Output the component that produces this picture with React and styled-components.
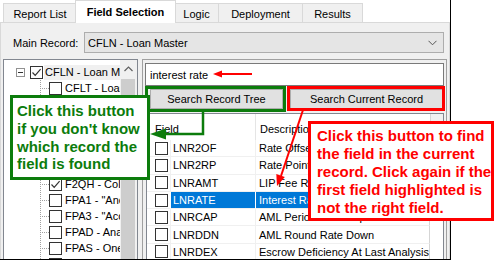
import React from "react";
import styled, { createGlobalStyle } from "styled-components";

const GREEN = "#0c7c0c";
const RED = "#ff0000";

const GlobalStyle = createGlobalStyle`
  html, body { margin: 0; padding: 0; background: #fff; }
  body { font-family: "Liberation Sans", Arial, sans-serif; font-size: 11px; color: #000; }
  * { box-sizing: border-box; }
`;

const Root = styled.div`
  position: relative;
  width: 495px;
  height: 260px;
  overflow: hidden;
  background: #fff;
`;

const Window = styled.div`
  width: 451px;
  height: 260px;
  border-right: 1px solid #000;
  border-bottom: 1px solid #000;
  display: flex;
  flex-direction: column;
  background: #fff;
`;

const TabStrip = styled.div`
  height: 22px;
  display: flex;
  align-items: flex-end;
  padding-left: 3px;
  position: relative;
  z-index: 1;
`;

const Tab = styled.div`
  width: ${(p) => p.$w}px;
  height: ${(p) => (p.$active ? 23 : 19)}px;
  margin-bottom: ${(p) => (p.$active ? -1 : 0)}px;
  margin-left: ${(p) => (p.$first ? 0 : p.$active ? -2 : -1)}px;
  margin-right: ${(p) => (p.$active ? -1 : 0)}px;
  border: 1px solid #d9d9d9;
  border-bottom: none;
  background: ${(p) => (p.$active ? "#ffffff" : "#f0f0f0")};
  font-weight: ${(p) => (p.$active ? "bold" : "normal")};
  display: flex;
  align-items: center;
  justify-content: center;
  padding-top: ${(p) => (p.$active ? 0 : 1)}px;
  position: relative;
  z-index: ${(p) => (p.$active ? 2 : 1)};
  white-space: nowrap;
`;

const TabPage = styled.div`
  flex: 1;
  min-height: 0;
  background: #f0f0f0;
  border: 1px solid #d9d9d9;
  border-bottom: none;
  display: flex;
  flex-direction: column;
  padding-top: 9px;
`;

const MainRow = styled.div`
  display: flex;
  align-items: center;
  height: 21px;
  padding: 0 5px 0 12px;
`;

const Label = styled.div`
  width: 71px;
  white-space: nowrap;
`;

const Combo = styled.div`
  width: 360px;
  height: 21px;
  border: 1px solid #adadad;
  background: #e5e5e5;
  display: flex;
  align-items: center;
  justify-content: space-between;
  padding: 0 6px 0 3px;
`;

const Lower = styled.div`
  flex: 1;
  min-height: 0;
  margin-top: 6px;
  padding: 0 2px;
  display: flex;
  gap: 4px;
  overflow: hidden;
`;

const TreeBox = styled.div`
  width: 135px;
  height: 202px;
  border: 1px solid #828790;
  background: #fff;
  display: flex;
  overflow: hidden;
`;

const TreeList = styled.div`
  flex: 1;
  min-width: 0;
  padding-top: 4px;
  overflow: hidden;
`;

const TreeRow = styled.div`
  height: 16px;
  display: flex;
  align-items: center;
  padding-left: ${(p) => (p.$root ? 12 : 36)}px;
  white-space: nowrap;
`;

const Expander = styled.span`
  width: 9px;
  height: 9px;
  border: 1px solid #919191;
  background: #fff;
  display: flex;
  align-items: center;
  justify-content: center;
  margin-right: 5px;
  flex: none;
  &::after {
    content: "";
    width: 5px;
    height: 1px;
    background: #333;
  }
`;

const Connector = styled.span`
  width: 9px;
  align-self: stretch;
  flex: none;
  background-image:
    repeating-linear-gradient(to bottom, #a0a0a0 0 1px, transparent 1px 2px),
    repeating-linear-gradient(to right, #a0a0a0 0 1px, transparent 1px 2px);
  background-size: 1px 100%, 100% 1px;
  background-position: left top, left center;
  background-repeat: no-repeat;
`;

const Box = styled.span`
  width: 13px;
  height: 13px;
  border: 1px solid #333;
  background: #fff;
  flex: none;
  display: flex;
  align-items: center;
  justify-content: center;
`;

const TreeText = styled.span`
  margin-left: ${(p) => (p.$root ? 1 : 2)}px;
  padding: 0 1px;
  line-height: 15px;
  background: ${(p) => (p.$sel ? "#f0f0f0" : "transparent")};
`;

const TreeScroll = styled.div`
  width: 17px;
  flex: none;
  background: #f0f0f0;
  display: flex;
  flex-direction: column;
`;

const ScrollBtn = styled.div`
  height: 18px;
  display: flex;
  align-items: center;
  justify-content: center;
`;

const Thumb = styled.div`
  flex: 1;
  margin: 1px 2px 0 1px;
  background: #cdcdcd;
`;

const RightPanel = styled.div`
  flex: 1;
  min-width: 0;
  height: 202px;
  border: 1px solid #a0a0a0;
  display: flex;
  flex-direction: column;
  padding: 3px 2px 0 2px;
`;

const SearchBox = styled.div`
  height: 23px;
  border: 1px solid #7a7a7a;
  background: #fff;
  display: flex;
  align-items: center;
  padding-left: 4px;
`;

const ButtonRow = styled.div`
  display: flex;
  gap: 7px;
  margin-top: 3px;
  padding-left: 5px;
`;

const Button = styled.div`
  width: ${(p) => p.$w}px;
  height: 20px;
  border: 1px solid #adadad;
  background: #e1e1e1;
  display: flex;
  align-items: center;
  justify-content: center;
  white-space: nowrap;
`;

const Grid = styled.div`
  flex: 1;
  margin: 4px 0 0 1px;
  border: 1px solid #828790;
  background: #fff;
  overflow: hidden;
`;

const HeaderRow = styled.div`
  height: 26px;
  display: grid;
  grid-template-columns: 108px 175px 1fr;
`;

const HeadCell = styled.div`
  display: flex;
  align-items: center;
  padding-top: 3px;
  padding-left: ${(p) => p.$pl}px;
  border-left: ${(p) => (p.$first ? "none" : "1px solid #e5e5e5")};
  white-space: nowrap;
  overflow: hidden;
`;

const HeadFill = styled.div`
  background: #f0f0f0;
  border-left: 1px solid #d5d5d5;
`;

const Row = styled.div`
  height: 17.3px;
  display: grid;
  grid-template-columns: 23px 85px 175px;
`;

const Cell = styled.div`
  display: flex;
  align-items: center;
  white-space: nowrap;
  overflow: hidden;
  border-bottom: 1px solid #f0f0f0;
  padding-left: ${(p) => p.$pl || 0}px;
  border-left: ${(p) => (p.$bl ? `1px solid ${p.$sel ? "#fff" : "#f0f0f0"}` : "none")};
  border-right: ${(p) => (p.$br ? "1px solid #d5d5d5" : "none")};
  background: ${(p) => (p.$sel ? "#0078d7" : "#fff")};
  color: ${(p) => (p.$sel ? "#fff" : "#000")};
`;

const Overlay = styled.div`
  position: absolute;
  inset: 0;
  pointer-events: none;
`;

const Arrows = styled.svg`
  position: absolute;
  left: 0;
  top: 0;
`;

const Frame = styled.div`
  position: absolute;
  left: ${(p) => p.$x}px;
  top: ${(p) => p.$y}px;
  width: ${(p) => p.$w}px;
  height: ${(p) => p.$h}px;
  border: 3px solid ${(p) => p.$c};
`;

const Callout = styled.div`
  position: absolute;
  left: ${(p) => p.$x}px;
  top: ${(p) => p.$y}px;
  width: ${(p) => p.$w}px;
  height: ${(p) => p.$h}px;
  border: 3px solid ${(p) => p.$c};
  background: #fff;
  color: ${(p) => p.$c};
  font-family: "Liberation Sans", Arial, sans-serif;
  font-weight: bold;
  font-size: 15px;
  line-height: ${(p) => p.$lh}px;
  padding: ${(p) => p.$pad};
  white-space: nowrap;
`;

const Check = () => (
  <svg width="11" height="11" viewBox="0 0 11 11">
    <polyline points="1.5,5.5 4.2,8.3 9.6,2.2" fill="none" stroke="#333" strokeWidth="1.2" />
  </svg>
);

const CheckBox = ({ checked }) => <Box>{checked && <Check />}</Box>;

const tabs = [
  { label: "Report List", w: 74 },
  { label: "Field Selection", w: 101, active: true },
  { label: "Logic", w: 45 },
  { label: "Deployment", w: 85 },
  { label: "Results", w: 61 },
];

const children = [
  { t: "CFLT - Loan Transactions" },
  { t: "CFLX - Loan Extension" },
  { t: "CFMD - Modifications" },
  { t: "CFPE - Pending Items" },
  { t: "CFPY - Payoff Quotes" },
  { t: "F1CO - Collateral" },
  { t: "F2QH - Collateral History", c: true },
  { t: 'FPA1 - "Another Loan"' },
  { t: 'FPA3 - "Accrual Detail"' },
  { t: "FPAD - Analysis Detail" },
  { t: "FPAS - One Time Analysis" },
  { t: "FPAT - Analysis Totals" },
];

const rows = [
  { f: "LNR2OF", d: "Rate Offset Factor" },
  { f: "LNR2RP", d: "Rate Point Factor" },
  { f: "LNRAMT", d: "LIP Fee Rate Amount" },
  { f: "LNRATE", d: "Interest Rate", sel: true },
  { f: "LNRCAP", d: "AML Period Rate Cap" },
  { f: "LNRDDN", d: "AML Round Rate Down" },
  { f: "LNRDEX", d: "Escrow Deficiency At Last Analysis" },
];

export default function App() {
  return (
    <Root>
      <GlobalStyle />
      <Window>
        <TabStrip>
          {tabs.map((t, i) => (
            <Tab key={t.label} $w={t.w} $active={t.active} $first={i === 0}>
              {t.label}
            </Tab>
          ))}
        </TabStrip>
        <TabPage>
          <MainRow>
            <Label>Main Record:</Label>
            <Combo>
              <span>CFLN - Loan Master</span>
              <svg width="9" height="6" viewBox="0 0 9 6">
                <polyline points="0.5,0.8 4.5,4.8 8.5,0.8" fill="none" stroke="#555" strokeWidth="1" />
              </svg>
            </Combo>
          </MainRow>
          <Lower>
            <TreeBox>
              <TreeList>
                <TreeRow $root>
                  <Expander />
                  <CheckBox checked />
                  <TreeText $root $sel>CFLN - Loan Master</TreeText>
                </TreeRow>
                {children.map((c) => (
                  <TreeRow key={c.t}>
                    <Connector />
                    <CheckBox checked={c.c} />
                    <TreeText>{c.t}</TreeText>
                  </TreeRow>
                ))}
              </TreeList>
              <TreeScroll>
                <ScrollBtn>
                  <svg width="9" height="6" viewBox="0 0 9 6">
                    <polyline points="0.5,5 4.5,1 8.5,5" fill="none" stroke="#606060" strokeWidth="1.2" />
                  </svg>
                </ScrollBtn>
                <Thumb />
              </TreeScroll>
            </TreeBox>
            <RightPanel>
              <SearchBox>interest rate</SearchBox>
              <ButtonRow>
                <Button $w={133}>Search Record Tree</Button>
                <Button $w={153}>Search Current Record</Button>
              </ButtonRow>
              <Grid>
                <HeaderRow>
                  <HeadCell $first $pl={8}>Field</HeadCell>
                  <HeadCell $pl={4}>Description</HeadCell>
                  <HeadFill />
                </HeaderRow>
                {rows.map((r) => (
                  <Row key={r.f}>
                    <Cell $pl={8}>
                      <CheckBox />
                    </Cell>
                    <Cell $pl={2} $bl $sel={r.sel}>{r.f}</Cell>
                    <Cell $pl={3} $bl $br $sel={r.sel}>{r.d}</Cell>
                  </Row>
                ))}
              </Grid>
            </RightPanel>
          </Lower>
        </TabPage>
      </Window>

      <Overlay>
        <Frame $x={145} $y={86} $w={141} $h={26} $c={GREEN} />
        <Frame $x={287} $y={86} $w={158} $h={25} $c={RED} />
        <Arrows width="495" height="260" viewBox="0 0 495 260">
          <line x1="252" y1="74" x2="220" y2="74" stroke={RED} strokeWidth="2" />
          <polygon points="213,74 222,70.5 222,77.5" fill={RED} />
          <line x1="303" y1="110" x2="281" y2="176" stroke={RED} strokeWidth="2" />
          <polygon points="277,186 284.8,177.1 276.3,174.1" fill={RED} />
          <polyline points="203,111 203,134 162,134" fill="none" stroke={GREEN} strokeWidth="2.5" />
          <polygon points="150,134 166,128.5 166,139.5" fill={GREEN} />
        </Arrows>
        <Callout $x={10} $y={95} $w={140} $h={85} $c={GREEN} $lh={17.8} $pad="4px 0 0 4px">
          Click this button
          <br />
          if you don't know
          <br />
          which record the
          <br />
          field is found
        </Callout>
        <Callout $x={308} $y={121} $w={186} $h={100} $c={RED} $lh={18} $pad="3px 0 0 6px">
          Click this button to find
          <br />
          the field in the current
          <br />
          record. Click again if the
          <br />
          first field highlighted is
          <br />
          not the right field.
        </Callout>
      </Overlay>
    </Root>
  );
}
